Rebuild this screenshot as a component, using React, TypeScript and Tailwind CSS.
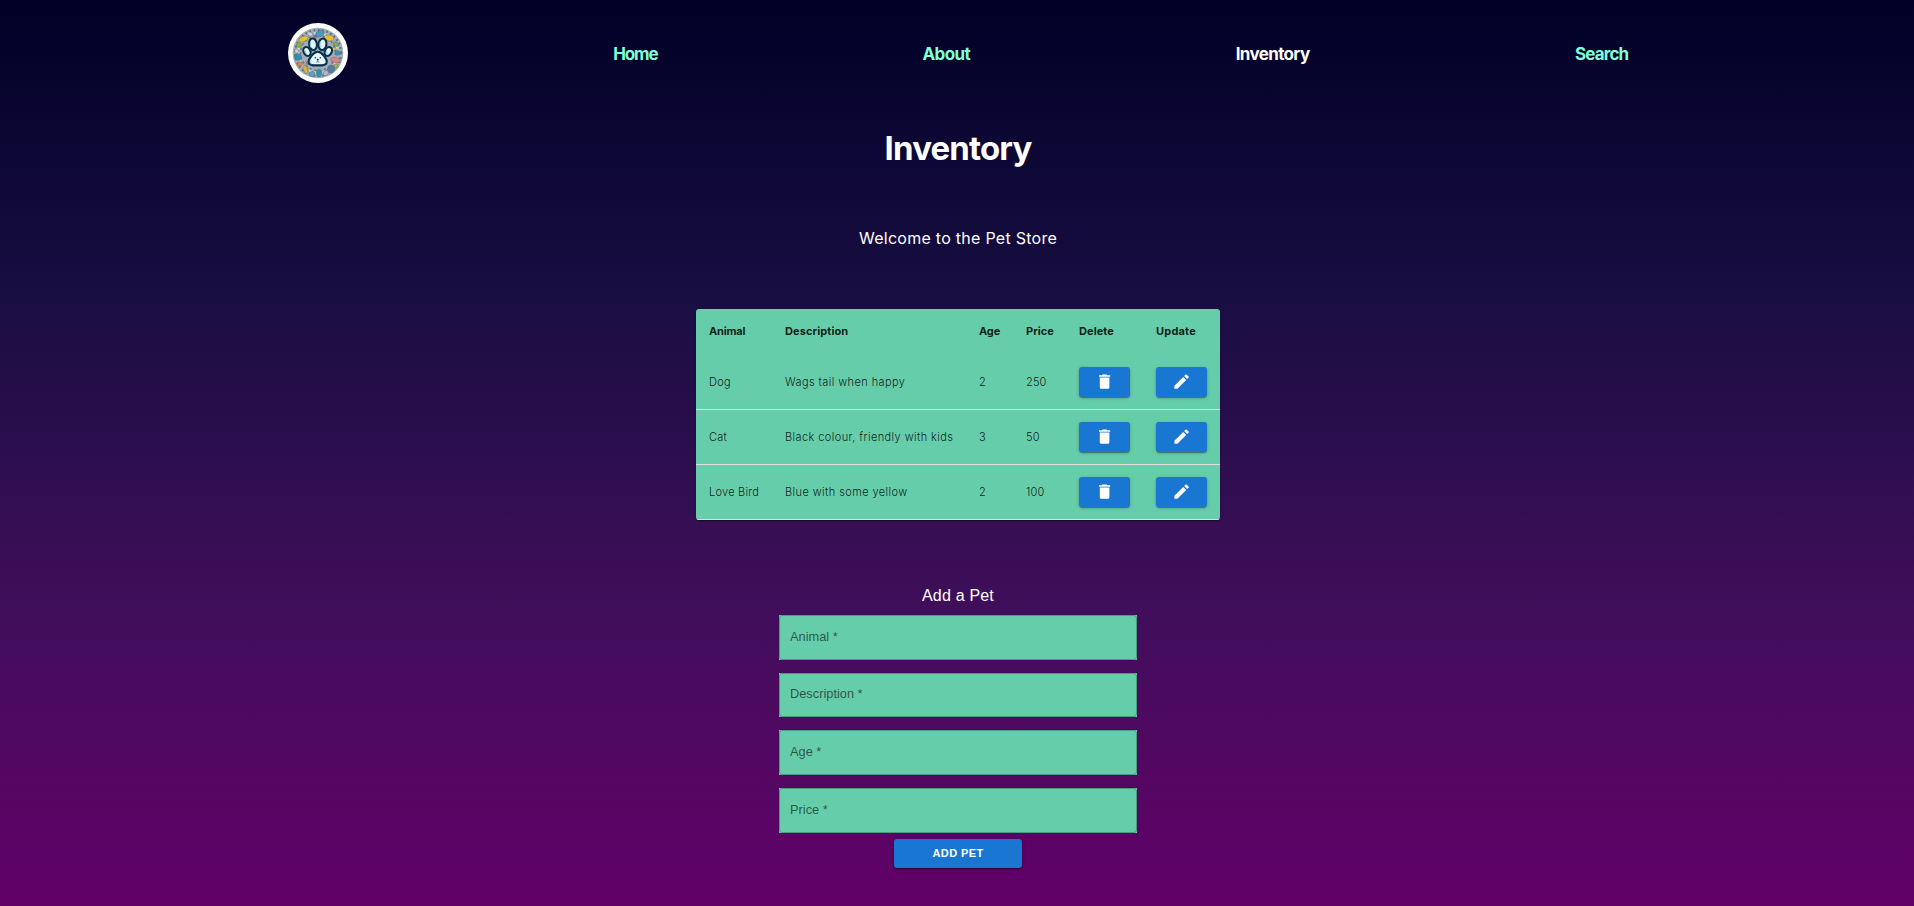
import type { ReactNode } from "react";

const pets = [
  { name: "Dog", description: "Wags tail when happy", age: 2, price: 250 },
  { name: "Cat", description: "Black colour, friendly with kids", age: 3, price: 50 },
  { name: "Love Bird", description: "Blue with some yellow", age: 2, price: 100 },
];

const columns = [
  { label: "Animal", style: "tracking-[-0.2px]" },
  { label: "Description", style: "tracking-[0.1px]" },
  { label: "Age", style: "tracking-[-0.1px]" },
  { label: "Price", style: "tracking-normal" },
  { label: "Delete", style: "tracking-[0.08px]" },
  { label: "Update", style: "tracking-[0.2px]" },
];

const fields = ["Animal", "Description", "Age", "Price"];

const grid = "grid grid-cols-[76px_194px_47px_53px_77px_77px] pl-[13px]";

const specks: [number, number, number, number, number, string][] = [
  [22, 11, 3, 2, 20, "#c9cdd6"], [32, 10.5, 4.5, 3, -25, "#4a9ac0"], [41, 15, 5, 3, 10, "#e9bd2c"],
  [15.5, 16, 5, 2.6, -20, "#e6c22a"], [11, 22, 2.6, 2.4, 0, "#8fb52e"], [48, 21, 3, 2, 30, "#7fb04a"],
  [10, 34, 3.6, 3.2, 20, "#2d8fb8"], [47.5, 37, 4.8, 2.6, 8, "#e58080"], [49.5, 30, 2.5, 2.5, 0, "#3c8fb4"],
  [12, 41, 2.6, 2.2, 0, "#ec8238"], [17.5, 46.5, 2.2, 4.6, -20, "#d8b43d"], [24, 51, 3, 2.6, 0, "#5ba1bd"],
  [31, 50, 2.6, 4, 0, "#2f93b6"], [38, 50, 2.4, 3, 20, "#b0b8c9"], [43, 46, 3.6, 4, 30, "#587ba3"],
  [48, 43, 2.2, 2, 0, "#9cbe36"], [17, 26, 1.8, 2, 0, "#4d9a72"], [46, 26, 2, 1.6, 0, "#ccd33a"],
  [8.5, 28, 2, 2, 0, "#cfd4dd"], [27, 14, 1.5, 2, 0, "#75818f"], [20, 40, 2, 1.6, 0, "#cf6a52"],
];

function PawLogo() {
  return (
    <svg viewBox="0 0 60 60" className="size-[60px]" role="img" aria-label="Pet Store">
      <circle cx="30" cy="30" r="30" fill="#fdfffa" />
      <circle cx="30" cy="30" r="25.3" fill="#a4acb8" />
      <circle cx="30" cy="30" r="23" fill="none" stroke="#566a7c" strokeWidth="2" strokeDasharray="1.6 2.7" />
      <circle cx="30" cy="30" r="20" fill="none" stroke="#cdd3db" strokeWidth="2.4" strokeDasharray="3 1.7" />
      <circle cx="30" cy="30" r="17.4" fill="none" stroke="#5d7082" strokeWidth="1.4" strokeDasharray="2 2.8" />
      {specks.map(([x, y, rx, ry, turn, fill]) => (
        <ellipse key={`${x}-${y}`} cx={x} cy={y} rx={rx} ry={ry} fill={fill} stroke="#5a6a79" strokeWidth="0.5" transform={`rotate(${turn} ${x} ${y})`} />
      ))}
      <g fill="#e4f5fc" stroke="#08304a" strokeWidth="2.1">
        <ellipse cx="25" cy="21.3" rx="3.9" ry="5.9" transform="rotate(-8 25 21.3)" />
        <ellipse cx="34.5" cy="21.3" rx="3.9" ry="5.9" transform="rotate(8 34.5 21.3)" />
        <ellipse cx="19" cy="28.5" rx="3.4" ry="4.6" transform="rotate(-28 19 28.5)" />
        <ellipse cx="40.300" cy="28.5" rx="3.4" ry="4.6" transform="rotate(28 40.3 28.5)" />
        <path d="M29.700 28.700c-4 0-5.200 3-7 5.300-1.700 2.100-2.700 3.900-1.700 6.200 1.200 2.600 4.700 2.200 8.700 2.200s7.500.4 8.700-2.200c1-2.300 0-4.100-1.700-6.200-1.800-2.300-3-5.300-7-5.300z" />
      </g>
      <g fill="none" stroke="#86cfe9" strokeWidth="1">
        <path d="M22.600 18.500c-.5 2-.4 4 .2 5.800M32.300 18.500c-.5 2-.4 4 .2 5.800M17.300 27.500c0 1.600.5 2.800 1.400 3.900M38.600 28c0 1.600.2 2.500.9 3.500M23 37c-1 1.600-.8 3.500 1 4" />
      </g>
      <g fill="#263b49">
        <circle cx="27.300" cy="34.800" r="0.8" />
        <circle cx="32.300" cy="34.800" r="0.8" />
        <ellipse cx="29.800" cy="36.600" rx="1.200" ry="0.8" />
      </g>
      <path d="M29.800 37v1.500m-1.500.5c.7.400 1.200.1 1.500-.5.300.6.800.9 1.500.5" fill="none" stroke="#263b49" strokeWidth="0.6" />
    </svg>
  );
}

function Glyph({ d }: { d: string }) {
  return (
    <svg viewBox="0 0 24 24" className="size-[19.2px]" fill="currentColor" aria-hidden="true">
      <path d={d} />
    </svg>
  );
}

const trash = "M6 19c0 1.100.9 2 2 2h8c1.100 0 2-.9 2-2V7H6v12zM19 4h-3.500l-1-1h-5l-1 1H5v2h14V4z";
const pencil = "M3 17.250V21h3.750L17.810 9.940l-3.750-3.750L3 17.250zM20.710 7.040c.39-.39.39-1.020 0-1.410l-2.340-2.340a.9959.9959 0 0 0-1.410 0l-1.830 1.830 3.750 3.750 1.830-1.830z";

function Button({ className, label, children }: { className: string; label?: string; children: ReactNode }) {
  return (
    <button
      type="button"
      aria-label={label}
      className={`flex items-center justify-center rounded-[3px] bg-[#1976d2] text-white shadow-[0_2px_1px_-1px_rgba(0,0,0,0.2),0_1px_2px_0_rgba(0,0,0,0.24),0_1px_4px_0_rgba(0,0,0,0.12)] ${className}`}
    >
      {children}
    </button>
  );
}

export default function App() {
  return (
    <div className="flex h-[906px] flex-col items-center overflow-hidden bg-[linear-gradient(180deg,#000026_0%,#190e42_33.3%,#410e5b_68%,#620068_100%)] pl-[2px] font-['Inter',sans-serif] text-white">
      <nav className="flex h-[106px] w-[1340px] items-center justify-between text-[17px] font-bold text-[#7fffd4]">
        <PawLogo />
        <a className="w-[44px] pt-[3px] whitespace-nowrap tracking-[-1.15px]">Home</a>
        <a className="w-[48px] pt-[3px] whitespace-nowrap tracking-[-0.6px]">About</a>
        <a className="w-[74px] pt-[3px] whitespace-nowrap tracking-[-0.65px] text-white">Inventory</a>
        <a className="w-[53px] pt-[3px] whitespace-nowrap tracking-[-0.85px]">Search</a>
      </nav>

      <h1 className="mt-[22px] text-[33px] leading-[40px] font-bold tracking-[-0.85px]">Inventory</h1>
      <p className="mt-[58px] text-[16px] leading-6 tracking-[0.27px]">Welcome to the Pet Store</p>

      <section className="mt-[59px] h-[211px] w-[524px] shrink-0 overflow-hidden rounded-[3px] bg-[#66cdaa] text-[11px] text-black/87 shadow-[0_2px_1px_-1px_rgba(0,0,0,0.2),0_1px_1px_0_rgba(0,0,0,0.14),0_1px_3px_0_rgba(0,0,0,0.12)]">
        <div className={`${grid} h-[46px] items-center pb-px font-bold`}>
          {columns.map((column) => (
            <span key={column.label} className={column.style}>{column.label}</span>
          ))}
        </div>
        {pets.map((pet) => (
          <div key={pet.name} className={`${grid} h-[55px] items-center border-b border-[#e0e0e0] font-light`}>
            <span className="tracking-[0.24px]">{pet.name}</span>
            <span className="tracking-[0.41px]">{pet.description}</span>
            <span>{pet.age}</span>
            <span className="tracking-[0.15px]">{pet.price}</span>
            <Button className="h-[29.4px] w-[51.2px]" label={`Delete ${pet.name}`}><Glyph d={trash} /></Button>
            <Button className="h-[29.4px] w-[51.2px]" label={`Update ${pet.name}`}><Glyph d={pencil} /></Button>
          </div>
        ))}
      </section>

      <form className="mt-[64px] flex w-[358px] flex-col items-center font-['Liberation_Sans',sans-serif]">
        <h2 className="text-[16px] leading-6 tracking-[0.19px]">Add a Pet</h2>
        <div className="mt-[7px] flex w-full flex-col gap-[12.800px]">
          {fields.map((field) => (
            <label key={field} className="flex h-[44.800px] w-full bg-[#66cdaa] text-[12.800px] text-black/60">
              <span className="flex w-full items-center rounded-[3px] border border-[#4c9a80] pb-[2px] pl-[10px]">{field} *</span>
            </label>
          ))}
        </div>
        <Button className="mt-[6px] h-[29px] w-[128px] text-[11px] font-bold tracking-[0.39px]">ADD PET</Button>
      </form>
    </div>
  );
}
